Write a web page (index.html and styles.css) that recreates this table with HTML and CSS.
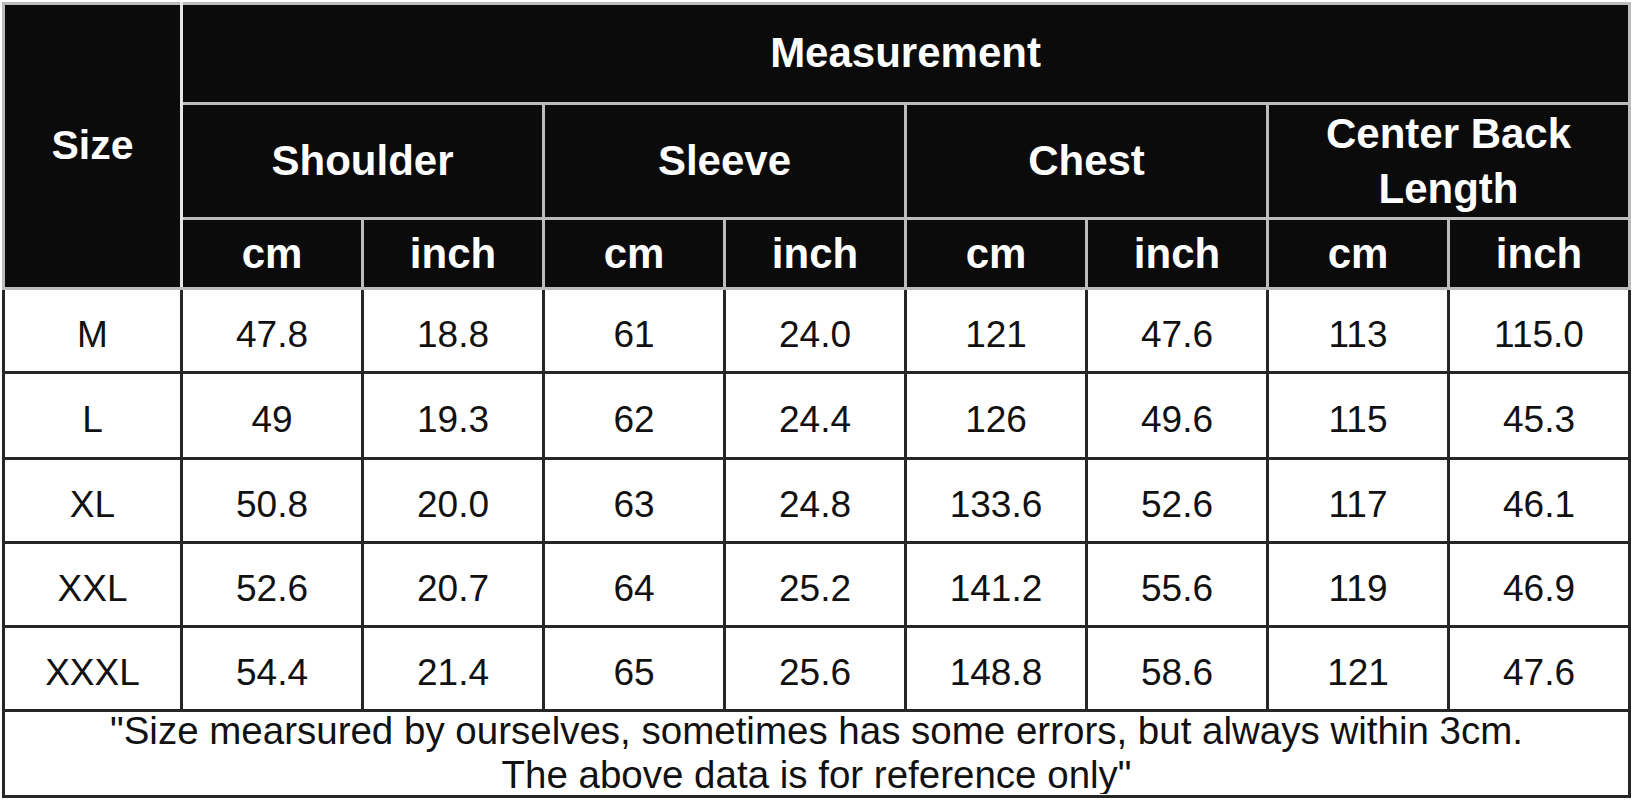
FILE: index.html
```html
<!DOCTYPE html>
<html>
<head>
<meta charset="utf-8">
<link rel="stylesheet" href="styles.css">
</head>
<body>
<table class="chart">
  <colgroup>
    <col class="c-size">
    <col class="c-val"><col class="c-val"><col class="c-val"><col class="c-val">
    <col class="c-val"><col class="c-val"><col class="c-val"><col class="c-val">
  </colgroup>
  <thead>
    <tr class="h1">
      <th rowspan="3" class="size-head">Size</th>
      <th colspan="8">Measurement</th>
    </tr>
    <tr class="h2">
      <th colspan="2">Shoulder</th>
      <th colspan="2">Sleeve</th>
      <th colspan="2">Chest</th>
      <th colspan="2" class="two-line">Center Back<br>Length</th>
    </tr>
    <tr class="h3">
      <th>cm</th><th>inch</th>
      <th>cm</th><th>inch</th>
      <th>cm</th><th>inch</th>
      <th>cm</th><th>inch</th>
    </tr>
  </thead>
  <tbody>
    <tr class="r r1"><td>M</td><td>47.8</td><td>18.8</td><td>61</td><td>24.0</td><td>121</td><td>47.6</td><td>113</td><td>115.0</td></tr>
    <tr class="r r2"><td>L</td><td>49</td><td>19.3</td><td>62</td><td>24.4</td><td>126</td><td>49.6</td><td>115</td><td>45.3</td></tr>
    <tr class="r"><td>XL</td><td>50.8</td><td>20.0</td><td>63</td><td>24.8</td><td>133.6</td><td>52.6</td><td>117</td><td>46.1</td></tr>
    <tr class="r"><td>XXL</td><td>52.6</td><td>20.7</td><td>64</td><td>25.2</td><td>141.2</td><td>55.6</td><td>119</td><td>46.9</td></tr>
    <tr class="r"><td>XXXL</td><td>54.4</td><td>21.4</td><td>65</td><td>25.6</td><td>148.8</td><td>58.6</td><td>121</td><td>47.6</td></tr>
    <tr class="foot">
      <td colspan="9">
        <div class="note">
          <div class="l1">"Size mearsured by ourselves, sometimes has some errors, but always within 3cm.</div>
          <div class="l2">The above data is for reference only"</div>
        </div>
      </td>
    </tr>
  </tbody>
</table>
</body>
</html>
```
FILE: styles.css
```css
html, body {
  margin: 0;
  padding: 0;
  background: #ffffff;
}
body {
  padding: 2px 0 0 2px;
  width: 1632px;
  height: 800px;
  overflow: hidden;
  box-sizing: border-box;
}
.chart {
  border-collapse: collapse;
  table-layout: fixed;
  width: 1627px;
  font-family: "Liberation Sans", Arial, sans-serif;
}
.c-size { width: 178px; }
.c-val { width: 181px; }

.chart th {
  background: #0b0b0b;
  color: #ffffff;
  font-weight: bold;
  font-size: 42px;
  border: 3px solid #bcbcbc;
  padding: 0;
  text-align: center;
  vertical-align: middle;
  line-height: 1.2;
}
.chart th.size-head {
  font-size: 41px;
  border-right-color: #e6e6e6;
}
.chart th.two-line {
  line-height: 55px;
}
.h1 { height: 100px; }
.h2 { height: 115px; }
.h3 { height: 70px; }
.h3 th { padding-top: 2px; }

.chart td {
  border: 3px solid #262626;
  color: #111111;
  font-size: 37px;
  text-align: center;
  vertical-align: middle;
  padding: 0;
  background: #ffffff;
}
.r { height: 84px; }
.r td { padding-top: 8px; }
.r2 { height: 86px; }
.foot { height: 86px; }
.foot td {
  vertical-align: top;
  padding: 0;
}
.note {
  font-size: 38.5px;
  height: 83px;
  color: #111111;
}
.l1 {
  line-height: 44px;
  margin-top: -3px;
}
.l2 {
  line-height: 44px;
  height: 41px;
  overflow: hidden;
}
```
